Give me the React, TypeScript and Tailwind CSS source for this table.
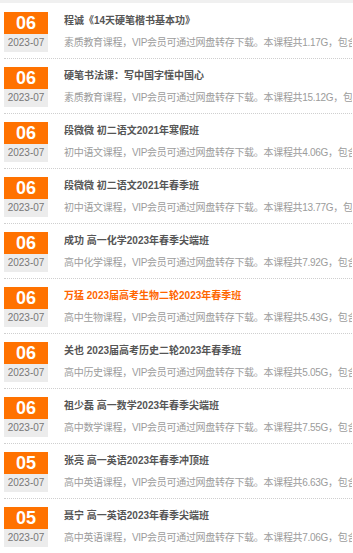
import React from "react";

type Item = { day: string; title: string; cat: string; size: string; hot?: boolean };

const items: Item[] = [
  { day: "06", title: "程诚《14天硬笔楷书基本功》", cat: "素质教育课程", size: "1.17G" },
  { day: "06", title: "硬笔书法课：写中国字懂中国心", cat: "素质教育课程", size: "15.12G" },
  { day: "06", title: "段微微 初二语文2021年寒假班", cat: "初中语文课程", size: "4.06G" },
  { day: "06", title: "段微微 初二语文2021年春季班", cat: "初中语文课程", size: "13.77G" },
  { day: "06", title: "成功 高一化学2023年春季尖端班", cat: "高中化学课程", size: "7.92G" },
  { day: "06", title: "万猛 2023届高考生物二轮2023年春季班", cat: "高中生物课程", size: "5.43G", hot: true },
  { day: "06", title: "关也 2023届高考历史二轮2023年春季班", cat: "高中历史课程", size: "5.05G" },
  { day: "06", title: "祖少磊 高一数学2023年春季尖端班", cat: "高中数学课程", size: "7.55G" },
  { day: "05", title: "张亮 高一英语2023年春季冲顶班", cat: "高中英语课程", size: "6.63G" },
  { day: "05", title: "聂宁 高一英语2023年春季尖端班", cat: "高中英语课程", size: "7.06G" },
];

export default function App() {
  return (
    <div
      className="w-[353px] h-[553px] overflow-hidden bg-white"
      style={{ fontFamily: '"Liberation Sans", "Noto Sans CJK SC", sans-serif' }}
    >
      <div className="h-[3px] bg-[#f0f0f0]" />
      <div className="pt-[1px] pl-[4px] pr-[1px]">
        {items.map((it, i) => (
          <div key={i} className="flex pt-[8px] pb-[6px] border-b border-dotted border-[#cfcfcf]">
            <div className="w-[44px] h-[40px] shrink-0 flex flex-col">
              <div className="h-[22px] bg-[#ff7200] text-white text-[18px] font-bold leading-[22px] text-center">
                {it.day}
              </div>
              <div className="h-[18px] bg-[#ececec] text-[#777] text-[10px] leading-[18px] text-center">
                2023-07
              </div>
            </div>
            <div className="ml-[16px] min-w-0 flex-1 h-[40px] overflow-hidden">
              <div
                className={`h-[18px] text-[10px] leading-[18px] font-bold whitespace-nowrap ${
                  it.hot ? "text-[#ff6600]" : "text-[#555]"
                }`}
              >
                {it.title}
              </div>
              <div className="mt-[4px] h-[18px] text-[10px] leading-[18px] tracking-[-0.3px] text-[#9c9c9c] whitespace-nowrap">
                {it.cat}，VIP会员可通过网盘转存下载。本课程共{it.size}，包含视频课程及配套资料。
              </div>
            </div>
          </div>
        ))}
      </div>
    </div>
  );
}
